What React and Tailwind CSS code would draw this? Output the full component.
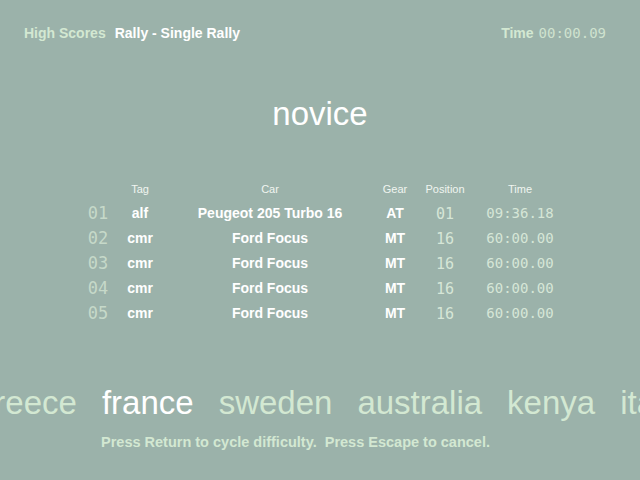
const sans = { fontFamily: '"Liberation Sans", Arial, sans-serif' };

const rows = [
  { n: "01", tag: "alf", car: "Peugeot 205 Turbo 16", gear: "AT", pos: "01", time: "09:36.18" },
  { n: "02", tag: "cmr", car: "Ford Focus", gear: "MT", pos: "16", time: "60:00.00" },
  { n: "03", tag: "cmr", car: "Ford Focus", gear: "MT", pos: "16", time: "60:00.00" },
  { n: "04", tag: "cmr", car: "Ford Focus", gear: "MT", pos: "16", time: "60:00.00" },
  { n: "05", tag: "cmr", car: "Ford Focus", gear: "MT", pos: "16", time: "60:00.00" },
];

const countries = ["greece", "france", "sweden", "australia", "kenya", "italy"];

function Lcd(props) {
  return (
    <span className={"slashed-zero font-['DejaVu_Sans_Mono',monospace] " + props.className}>
      {props.children}
    </span>
  );
}

function ScoreTable() {
  const cols = "grid grid-cols-[40px_44px_216px_34px_66px_84px] items-center";
  return (
    <div className="ml-[78px] mt-[44px]">
      <div className={cols + " h-[24px] text-[11px] text-[#f0f5f0] text-center"}>
        <span></span>
        <span>Tag</span>
        <span>Car</span>
        <span>Gear</span>
        <span>Position</span>
        <span>Time</span>
      </div>
      {rows.map((r) => (
        <div key={r.n} className={cols + " h-[25px] text-center"}>
          <Lcd className="text-[17px] text-[#c6d9c9]">{r.n}</Lcd>
          <span className="text-[14px] font-bold text-white">{r.tag}</span>
          <span className="text-[14px] font-bold text-white">{r.car}</span>
          <span className="text-[14px] font-bold text-white">{r.gear}</span>
          <Lcd className="text-[15px] text-[#d6e6d7]">{r.pos}</Lcd>
          <Lcd className="text-[14px] text-[#d6e6d7]">{r.time}</Lcd>
        </div>
      ))}
    </div>
  );
}

export default function App() {
  return (
    <div style={sans} className="w-[640px] h-[480px] bg-[#9bb2aa] overflow-hidden flex flex-col">
      <div className="flex justify-between items-center px-[24px] pt-[23px] h-[43px] text-[14px] font-bold leading-[20px]">
        <div className="flex gap-[9px]">
          <span className="text-[#d3e8d2]">High Scores</span>
          <span className="text-white">Rally - Single Rally</span>
        </div>
        <div className="flex items-center gap-[5px] pr-[10px]">
          <span className="text-[#d3e8d2]">Time</span>
          <Lcd className="text-[14px] font-normal text-[#cfe2cf]">00:00.09</Lcd>
        </div>
      </div>

      <div className="mt-[52px] text-center text-[33px] leading-[38px] text-white">novice</div>

      <ScoreTable />

      <div className="mt-[58px] flex gap-[25px] ml-[-24px] whitespace-nowrap text-[33px] leading-[38px] text-[#d3e8d2]">
        {countries.map((c) => (
          <span key={c} className={c === "france" ? "text-white" : ""}>{c}</span>
        ))}
      </div>

      <div className="mt-[10px] pl-[101px] whitespace-pre text-[14.5px] leading-[20px] font-bold text-[#d3e8d2]">
        {"Press Return to cycle difficulty.  Press Escape to cancel."}
      </div>
    </div>
  );
}
